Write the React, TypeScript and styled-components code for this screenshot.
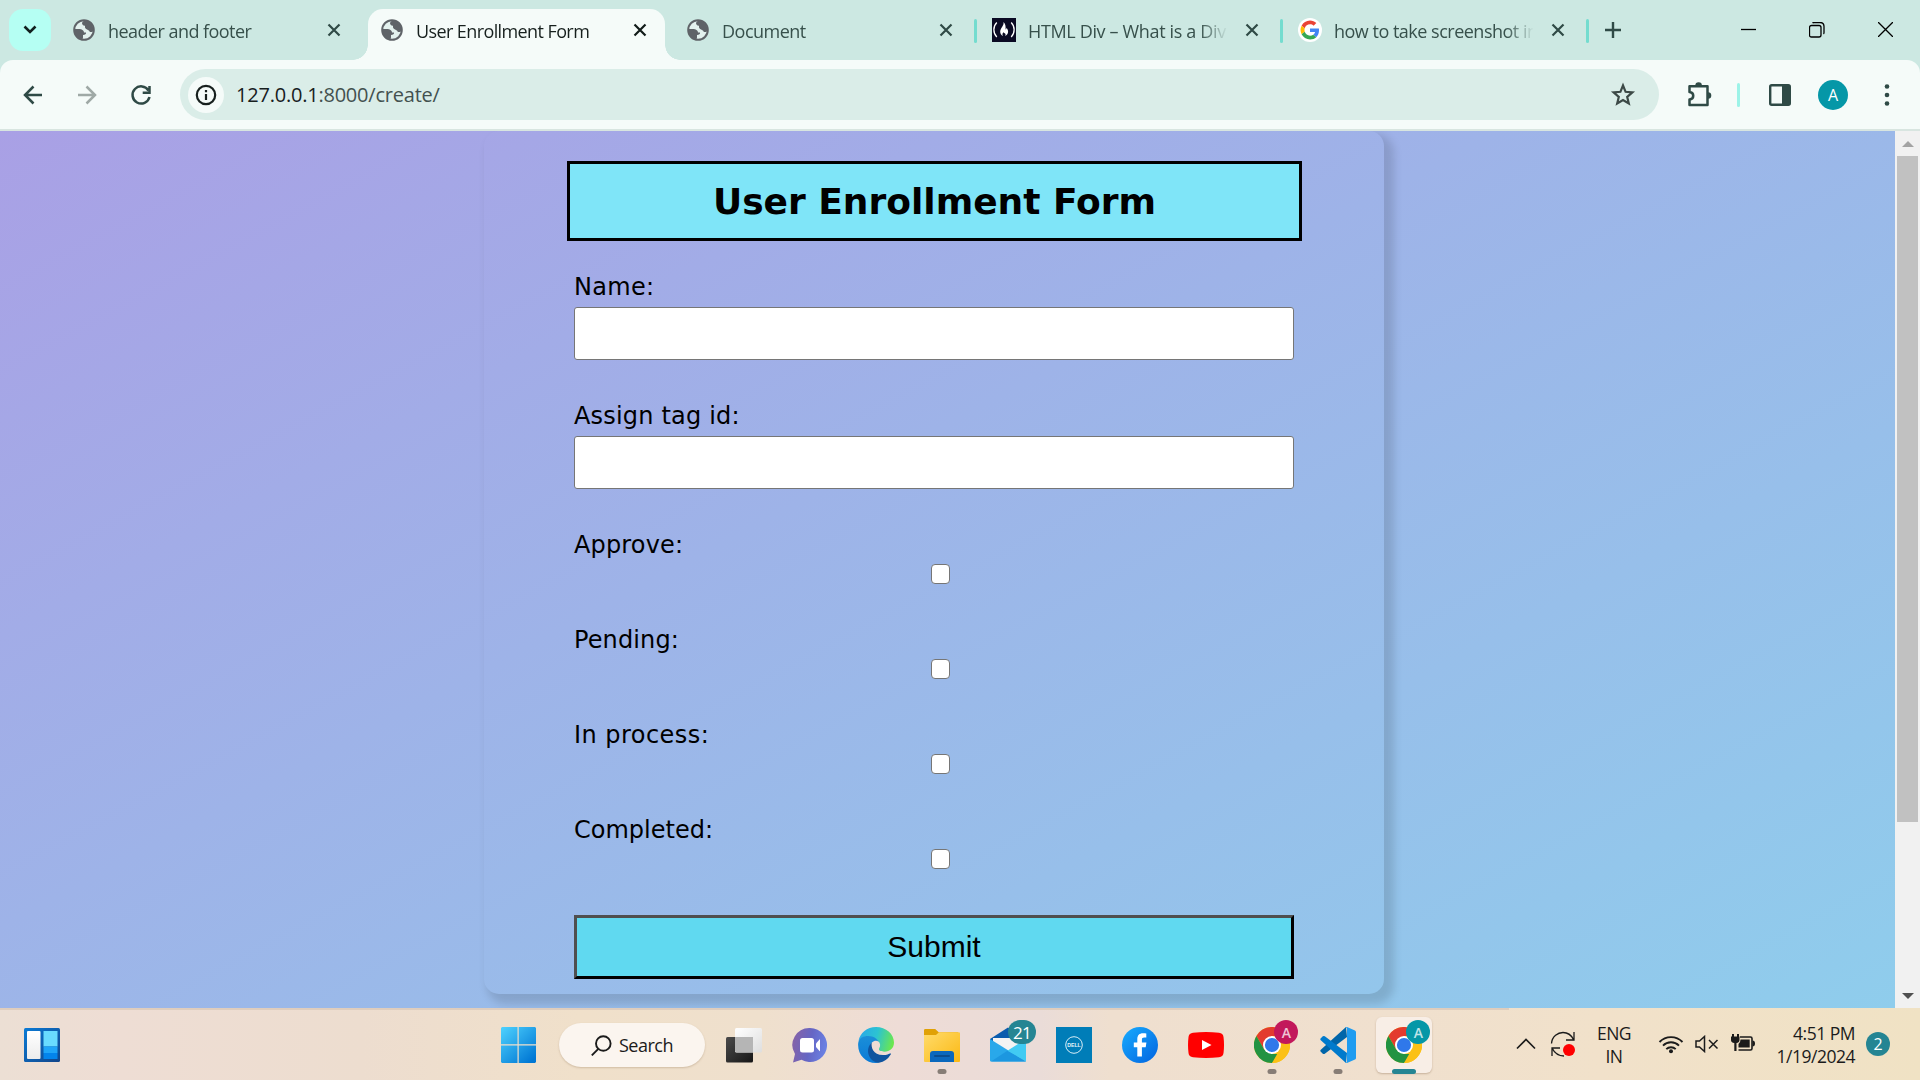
import React from "react";
import styled, { createGlobalStyle, css } from "styled-components";

const ui = `"Open Sans", "Noto Sans", sans-serif`;

const Global = createGlobalStyle`
  * { box-sizing: border-box; }
  html, body { margin: 0; padding: 0; overflow: hidden; }
  svg { display: block; flex: none; }
`;

const Screen = styled.div`
  width: 1920px;
  height: 1080px;
  display: flex;
  flex-direction: column;
  overflow: hidden;
  font-family: ${ui};
`;

/* ---------- text with tuned tracking ---------- */
const Label = styled.span<{ $size: number; $track?: number; $color?: string }>`
  display: block;
  font-size: ${(p) => p.$size}px;
  letter-spacing: ${(p) => p.$track ?? 0}px;
  color: ${(p) => p.$color ?? "#1b1b1b"};
  white-space: nowrap;
  line-height: 1.3;
`;

/* ---------- tab strip ---------- */
const TabStrip = styled.header`
  height: 60px;
  flex: none;
  display: flex;
  background: #cce8e2;
  padding-left: 9px;
`;

const TabSearch = styled.button`
  width: 42px;
  height: 42px;
  margin: 9px 11px 0 0;
  padding: 0;
  border: 0;
  border-radius: 14px;
  background: #b5fff3;
  display: flex;
  align-items: center;
  justify-content: center;
`;

const TabBox = styled.div<{ $active?: boolean }>`
  position: relative;
  width: 306px;
  height: 51px;
  margin-top: 9px;
  padding: 0 27px 9px 12px;
  display: flex;
  align-items: center;
  &:first-of-type {
    padding-left: 10px;
  }
  ${(p) =>
    p.$active &&
    css`
      &::before {
        content: "";
        position: absolute;
        inset: 0 9px 0 0;
        background: #f5fbf9;
        border-radius: 15px 15px 0 0;
      }
      &::after {
        content: "";
        position: absolute;
        bottom: 0;
        left: -15px;
        right: -6px;
        height: 15px;
        background:
          radial-gradient(circle at 0 0, transparent 14.5px, #f5fbf9 15px) left / 15px 15px no-repeat,
          radial-gradient(circle at 100% 0, transparent 14.5px, #f5fbf9 15px) right / 15px 15px no-repeat;
      }
    `}
  > * {
    position: relative;
    z-index: 1;
  }
`;

const TabTitle = styled.div`
  flex: 1;
  min-width: 0;
  margin: 4px 18px 0 12px;
  overflow: hidden;
  mask-image: linear-gradient(90deg, #000 172px, transparent 200px);
`;

const Divider = styled.i<{ $color: string }>`
  display: block;
  flex: none;
  width: 3px;
  height: 24px;
  border-radius: 2px;
  background: ${(p) => p.$color};
`;

const TabEnd = styled.span`
  width: 3px;
  margin: 19px 3px 0 -6px;
`;

const NewTab = styled.div`
  margin: 22px 0 0 13px;
`;

const WindowButtons = styled.div`
  display: flex;
  align-items: flex-start;
  gap: 53px;
  margin: 22px 27px 0 auto;
`;

/* ---------- toolbar ---------- */
const ToolbarBack = styled.div`
  flex: none;
  background: #cce8e2;
`;

const Toolbar = styled.div`
  height: 71px;
  display: flex;
  align-items: center;
  padding: 0 25px 0 21px;
  background: #f5fbf9;
  border-bottom: 2px solid #d8e5e0;
  border-radius: 13px 13px 0 0;
`;

const NavIcons = styled.div`
  display: flex;
  gap: 30px;
  width: 159px;
`;

const AddressBar = styled.div`
  width: 1479px;
  height: 51px;
  border-radius: 26px;
  background: #daede8;
  display: flex;
  align-items: center;
  padding: 0 23px 0 8px;
`;

const InfoDot = styled.div`
  width: 36px;
  height: 36px;
  border-radius: 50%;
  background: #f5fbf9;
  display: grid;
  place-items: center;
  margin-right: 12px;
`;

const Url = styled.div`
  flex: 1;
  font-size: 20px;
  letter-spacing: -0.22px;
  color: #43514f;
  b {
    font-weight: 400;
    color: #17201e;
  }
`;

const ToolActions = styled.div`
  flex: 1;
  display: flex;
  align-items: center;
  padding-left: 26px;
`;

const Avatar = styled.div`
  width: 30px;
  height: 30px;
  border-radius: 50%;
  background: #0597a7;
  color: #fff;
  font: 16px/30px ${ui};
  text-align: center;
  margin: 0 36px 0 26px;
`;

/* ---------- page ---------- */
const Viewport = styled.main`
  height: 877px;
  flex: none;
  display: flex;
  overflow: hidden;
`;

const Page = styled.div`
  flex: 1;
  overflow: hidden;
  background: linear-gradient(152deg, #a9a0e5, #8cd2ed) 0 0 / 100% 1091px no-repeat;
  padding-left: 484px;
`;

const Form = styled.form`
  width: 900px;
  height: 863px;
  padding: 30px 90px 0;
  border-radius: 15px;
  box-shadow: 6.5px 6.5px 8px 3.5px rgba(0, 0, 0, 0.13);
  font-family: Verdana, "DejaVu Sans", sans-serif;
  color: #000;
`;

const Heading = styled.h1`
  width: 735px;
  height: 80px;
  margin: 0 0 33px -7px;
  border: 3px solid #000;
  background: #7fe5f8;
  font-size: 36px;
  line-height: 76px;
  text-align: center;
`;

const Field = styled.div<{ $check?: boolean }>`
  height: ${(p) => (p.$check ? 95 : 129)}px;
`;

const FieldLabel = styled.label<{ $track: number }>`
  display: block;
  height: 33px;
  font-size: 24px;
  line-height: 26px;
  letter-spacing: ${(p) => p.$track}px;
`;

const TextInput = styled.input`
  display: block;
  width: 720px;
  height: 53px;
  border: 1px solid #767676;
  border-radius: 3px;
  background: #fff;
  padding: 0;
`;

const Check = styled.input`
  appearance: none;
  display: block;
  width: 19.5px;
  height: 19.5px;
  margin: -1px 0 0 356.5px;
  border: 1.5px solid #767676;
  border-radius: 4px;
  background: #fff;
`;

const Submit = styled.button`
  display: block;
  width: 720px;
  height: 64px;
  margin-top: 3px;
  padding: 0;
  border: 3px solid;
  border-color: #4f4f4f #000 #000 #4f4f4f;
  background: #60d9f0;
  font: 30px/58px "Liberation Sans", Arial, sans-serif;
  color: #000;
`;

const Scrollbar = styled.div`
  width: 25px;
  background: #f1f1f1;
  display: flex;
  flex-direction: column;
  align-items: center;
  padding: 10px 0 9px;
`;

const Thumb = styled.div`
  width: 21px;
  height: 666px;
  margin: 9px 0 auto;
  background: #c1c1c1;
`;

const Arrow = styled.i<{ $down?: boolean }>`
  width: 0;
  height: 0;
  border: 6px solid transparent;
  ${(p) =>
    p.$down
      ? "border-top-color:#505050;border-bottom:0;"
      : "border-bottom-color:#a3a3a3;border-top:0;"}
`;

/* ---------- taskbar ---------- */
const Taskbar = styled.footer`
  height: 72px;
  flex: none;
  display: flex;
  align-items: center;
  background:
    linear-gradient(#dfcdbd, #dfcdbd) 0 0 / 1509px 2px no-repeat,
    linear-gradient(90deg, #ecdfd4 0, #eeddd4 120px, #edddcf 360px, #f0e0ca 580px, #efe0cd 760px, #eedcd6 900px, #eadcd8 1040px, #efdfcf 1110px, #f0e0ce 1400px, #f1e1ca 1600px, #f0e2c4 1920px);
`;

const WidgetSlot = styled.div`
  width: 485px;
  padding: 1px 0 0 24px;
`;

const Slot = styled.div<{ $active?: boolean }>`
  position: relative;
  width: 66px;
  height: 72px;
  display: grid;
  place-items: center;
  ${(p) =>
    p.$active &&
    css`
      &::before {
        content: "";
        position: absolute;
        inset: 9px 5px 7px;
        border-radius: 6px;
        background: #f8eee6;
        box-shadow: 0 1px 2px rgba(120, 90, 60, 0.35);
      }
    `}
  > svg {
    position: relative;
    margin-top: 2px;
  }
`;

const Indicator = styled.i<{ $active?: boolean }>`
  position: absolute;
  bottom: 6px;
  left: 50%;
  transform: translateX(-50%);
  width: ${(p) => (p.$active ? 24 : 9)}px;
  height: 5px;
  border-radius: 3px;
  background: ${(p) => (p.$active ? "#258593" : "#877d76")};
`;

const Badge = styled.span<{ $bg: string; $wide?: boolean }>`
  position: absolute;
  top: 12px;
  left: ${(p) => (p.$wide ? 33 : 35)}px;
  width: ${(p) => (p.$wide ? 28 : 24)}px;
  height: 24px;
  border-radius: 12px;
  background: ${(p) => p.$bg};
  color: ${(p) => (p.$wide ? "#fff" : "rgba(255, 255, 255, 0.75)")};
  font: ${(p) => (p.$wide ? "17px/25px" : "600 14px/25px")} ${ui};
  letter-spacing: -0.8px;
  text-align: center;
`;

const SearchPill = styled.div`
  width: 146px;
  height: 44px;
  margin: 2px 6px 0 8px;
  border-radius: 22px;
  background: #fbf5ef;
  box-shadow: 0 1px 2px rgba(150, 120, 90, 0.35);
  display: flex;
  align-items: center;
  padding-left: 32px;
  gap: 7px;
  > span {
    margin-top: 2px;
  }
`;

const Tray = styled.div`
  margin-left: auto;
  display: flex;
  align-items: center;
  padding-right: 30px;
`;

const Stack = styled.div<{ $w: number; $align: string; $ml: number }>`
  width: ${(p) => p.$w}px;
  margin: 2px 0 0 ${(p) => p.$ml}px;
  display: flex;
  flex-direction: column;
  align-items: ${(p) => p.$align};
`;

const Count = styled.div`
  width: 24px;
  height: 24px;
  margin: 0 0 0 11px;
  border-radius: 50%;
  background: #258593;
  color: #fff;
  font: 16px/24px ${ui};
  text-align: center;
`;

const Space = styled.i<{ $w: number }>`
  flex: none;
  width: ${(p) => p.$w}px;
`;

/* ---------- icons ---------- */
const Globe = () => (
  <svg width="24" height="24" viewBox="0 0 24 24">
    <circle cx="12" cy="12" r="9.800" fill="#e3f1ee" stroke="#5f6368" strokeWidth="2" />
    <path d="M12.500 2.500C10 4 9.500 5 10.500 6.500 11 7.500 12 8 13 7.500V9.500C14 12 17 11.500 17.500 13.500c1 1 3 .5 4-.5A9.700 9.700 0 0 0 12.500 2.500z" fill="#5f6368" />
    <path d="M2.200 11H7c2.500 0 5 1.500 5 3.500h2c.5 1.500-1 2.500-3 2.500v2.500c0 1-1 2-1.500 2A9.700 9.700 0 0 1 2.200 11z" fill="#5f6368" />
  </svg>
);

const FreeCodeCamp = () => (
  <svg width="24" height="24" viewBox="0 0 24 24">
    <path d="M0 0h24v24H0z" fill="#0a0a23" />
    <path d="M4.800 4.500C.9 8.500.9 15 4.800 19M19.200 4.500c3.900 4 3.900 10.500 0 14.500" stroke="#fff" strokeWidth="1.300" fill="none" />
    <path d="M11.500 4c.7 4-3.300 6-3.300 9.700 0 2 1 3.300 2.700 4.200-.8-1.300-.4-2.600.7-3.800.1 1 .6 1.300 1.300 1.100 1 .8.8 1.900.1 2.700 1.900-.7 3.200-2.100 3.100-4.300 0-1.600-.8-2.900-1.700-3.900.1 1-.2 1.600-.8 1.700C13.800 8.500 13.500 5.500 11.500 4z" fill="#fff" />
  </svg>
);

const Google = () => (
  <svg width="24" height="24" viewBox="0 0 24 24">
    <circle cx="12" cy="12" r="12" fill="#fff" />
    <g transform="translate(2.600 2.600) scale(.392)">
      <path fill="#EA4335" d="M24 9.500c3.540 0 6.710 1.220 9.210 3.600l6.850-6.850C35.900 2.380 30.470 0 24 0 14.620 0 6.510 5.380 2.560 13.220l7.980 6.190C12.430 13.720 17.740 9.500 24 9.500z" />
      <path fill="#4285F4" d="M46.980 24.550c0-1.570-.15-3.090-.38-4.550H24v9.020h12.940c-.58 2.960-2.260 5.480-4.780 7.180l7.730 6c4.510-4.180 7.090-10.360 7.090-17.650z" />
      <path fill="#FBBC05" d="M10.530 28.590a14.500 14.500 0 0 1 0-9.180l-7.980-6.190a24 24 0 0 0 0 21.560l7.980-6.190z" />
      <path fill="#34A853" d="M24 48c6.480 0 11.930-2.130 15.890-5.810l-7.730-6c-2.150 1.450-4.920 2.300-8.160 2.300-6.260 0-11.570-4.220-13.470-9.910l-7.980 6.190C6.510 42.620 14.620 48 24 48z" />
    </g>
  </svg>
);

const Stroke = ({ d, w, h, sw = 2, color = "#2f4a46" }: { d: string; w: number; h: number; sw?: number; color?: string }) => (
  <svg width={w} height={h} viewBox={`0 0 ${w} ${h}`} fill="none" stroke={color} strokeWidth={sw}>
    <path d={d} />
  </svg>
);

const Close = ({ dark }: { dark?: boolean }) => (
  <Stroke w={14} h={14} sw={2.2} d="M1.500 1.500l11 11M12.500 1.500l-11 11" color={dark ? "#111b19" : "#2f4a46"} />
);

const Chrome = () => (
  <svg width="36" height="36" viewBox="0 0 36 36">
    <circle cx="18" cy="18" r="18" fill="#fbc116" />
    <path d="M2.400 9A18 18 0 0 1 33.600 9H18l-7.800 13.500z" fill="#e33b2e" />
    <path d="M2.400 9l7.800 13.500L18 27h7.800L18 36A18 18 0 0 1 2.400 9z" fill="#229342" />
    <path d="M18 36l7.800-13.500V9h7.800A18 18 0 0 1 18 36z" fill="#fbc116" />
    <circle cx="18" cy="18" r="9" fill="#fff" />
    <circle cx="18" cy="18" r="7.100" fill="#2f78ea" />
  </svg>
);

const Widgets = () => (
  <svg width="36" height="34" viewBox="0 0 36 34">
    <defs>
      <linearGradient id="wg" x1="0" y1="0" x2="1" y2="1"><stop stopColor="#0a7bd6" /><stop offset="1" stopColor="#12458a" /></linearGradient>
      <linearGradient id="ww" x1="0" y1="0" x2="0" y2="1"><stop stopColor="#fff" /><stop offset="1" stopColor="#ececec" /></linearGradient>
    </defs>
    <rect width="36" height="34" rx="1.500" fill="url(#wg)" />
    <rect x="3" y="3" width="13.500" height="28" rx="1" fill="url(#ww)" />
    <path d="M19.500 3h14v15.500h-14z" fill="#69dcff" />
    <path d="M19.500 18.500h14V25h-14z" fill="#1fa5f8" />
    <path d="M19.500 25h14v6h-14z" fill="#0384ec" />
  </svg>
);

const Windows = () => (
  <svg width="36" height="36" viewBox="0 0 36 36">
    <defs><linearGradient id="win" gradientUnits="userSpaceOnUse" x1="0" y1="0" x2="32" y2="34"><stop stopColor="#50d4ff" /><stop offset="1" stopColor="#0077d4" /></linearGradient></defs>
    <path d="M2 0h15.500v17.300H1V1zM18.700 0H35l1 1v16.300H18.700zM1 18.500h16.500V36H2l-1-1zM18.700 18.500H36V35l-1 1H18.700z" fill="url(#win)" />
  </svg>
);

const TaskView = () => (
  <svg width="36" height="36" viewBox="0 0 36 36">
    <defs>
      <linearGradient id="tv" x1="0" y1="0" x2="1" y2="1"><stop stopColor="#4b4b4b" /><stop offset="1" stopColor="#161616" /></linearGradient>
      <linearGradient id="tl" x1="0" y1="0" x2="1" y2="1"><stop stopColor="#fff" /><stop offset="1" stopColor="#dedede" /></linearGradient>
    </defs>
    <rect y="10" width="27" height="25.500" rx="1.500" fill="url(#tv)" />
    <rect x="9" y="1" width="27" height="24.500" rx="1.500" fill="url(#tl)" />
    <path d="M9 10h18v15.500H10.500L9 24z" fill="#b5b5b5" />
  </svg>
);

const Chat = () => (
  <svg width="36" height="36" viewBox="0 0 36 36">
    <defs><linearGradient id="ch" x1="0" y1="0.400" x2="1" y2="0.600"><stop stopColor="#8562a8" /><stop offset=".5" stopColor="#6566c4" /><stop offset="1" stopColor="#6b83e6" /></linearGradient></defs>
    <path d="M18 1a17 17 0 1 1-8.500 31.700L1 35.500l2-8.500A17 17 0 0 1 18 1z" fill="url(#ch)" />
    <rect x="8" y="11" width="14" height="14.500" rx="2.500" fill="#fff" />
    <path d="M24 16.500l3.500-4q.5-.4.5.3v11q0 .7-.5.3l-3.500-4z" fill="#fff" />
  </svg>
);

const Edge = () => (
  <svg width="36" height="36" viewBox="0 0 36 36">
    <defs>
      <linearGradient id="e1" x1="0" y1="0.300" x2="1" y2="0.500"><stop stopColor="#29a8e8" /><stop offset=".5" stopColor="#2cc3d2" /><stop offset="1" stopColor="#6be74e" /></linearGradient>
      <linearGradient id="e2" x1="0" y1="0" x2="0" y2="1"><stop stopColor="#1b8fd8" /><stop offset="1" stopColor="#0a7ad6" /></linearGradient>
    </defs>
    <path d="M.5 14C2 6 9 0 18 0c10 0 18 7 18 15.500 0 6-4.500 9.200-9.500 9.200-4 0-6.500-1.500-5.300-3.400 1.500-2.300 1.300-5-1-7.300C15 8.500 4.500 8 .5 14z" fill="url(#e1)" />
    <path d="M.2 16C1 10.500 6 8.700 10.500 8.900c5 .2 9 2.600 10.300 6-1.800-1.900-4.800-1.500-6.800.6C9 20.500 12 32 21.500 35.600 9.500 38-1 28.500.2 16z" fill="url(#e2)" />
    <path d="M13.800 15.700c-1 4 1.200 12.300 11.200 12.300 4 0 6-1.400 7.200-1.600.9-.1 1 .5.500 1.200A17 17 0 0 1 21 35.800C9.500 34.500 7 21 13.800 15.700z" fill="#0f549f" />
  </svg>
);

const Folder = () => (
  <svg width="36" height="36" viewBox="0 0 36 36">
    <defs><linearGradient id="fo" x1="0" y1="0" x2="1" y2="1"><stop stopColor="#ffdb6b" /><stop offset="1" stopColor="#fbb914" /></linearGradient></defs>
    <path d="M0 3.200Q0 2 1.200 2h10l3.500 3.200H34V12H0z" fill="#e0a106" />
    <path d="M0 8h12l3-2.800h20q1 0 1 1V34q0 1-1 1H1q-1 0-1-1z" fill="url(#fo)" />
    <path d="M6 35V27q0-3 3-3h18q3 0 3 3v8z" fill="#0b68bd" />
    <path d="M11 29h14" stroke="#0a4d8f" strokeWidth="2" strokeLinecap="round" />
  </svg>
);

const Mail = () => (
  <svg width="36" height="36" viewBox="0 0 36 36">
    <path d="M0 12L18 .5 36 12v8H0z" fill="#0b5cae" />
    <path d="M3 11h30v9L18 25 3 19z" fill="#f3f3f3" />
    <path d="M0 12l36 22.500H1q-1 0-1-1z" fill="#29a8ea" />
    <path d="M36 12L17 24l19 10.500z" fill="#41cbf3" />
    <path d="M17 23.500L36 34.500H1L17 24z" fill="#1c97e0" />
  </svg>
);

const Dell = () => (
  <svg width="36" height="36" viewBox="0 0 36 36">
    <path d="M0 0h36v36H0z" fill="#007db8" />
    <circle cx="18" cy="18" r="8.300" fill="none" stroke="#d9eef7" strokeWidth="1" />
    <text x="18" y="20" textAnchor="middle" fontFamily="Liberation Sans, sans-serif" fontWeight="700" fontSize="5.200" fill="#e6f4fa">DELL</text>
  </svg>
);

const Facebook = () => (
  <svg width="36" height="36" viewBox="0 0 36 36">
    <defs><linearGradient id="fb" x1="0" y1="0" x2="1" y2="1"><stop stopColor="#18acfe" /><stop offset="1" stopColor="#0163e0" /></linearGradient></defs>
    <circle cx="18" cy="18" r="18" fill="url(#fb)" />
    <path d="M15.300 29.500V20.200h-3.500V15.500h3.500v-3.300c0-4 2-6 5.700-6 1.500 0 2.600.2 3.300.4v4h-2.200c-1.600 0-2.200.8-2.200 2.300v2.600h4.500l-.7 4.700h-3.800v9.300z" fill="#fff" />
  </svg>
);

const YouTube = () => (
  <svg width="36" height="36" viewBox="0 0 36 36">
    <path d="M5 5.800q13-1.400 26 0 4 .5 4.500 4.200 1 8 0 16-.5 3.700-4.500 4.200-13 1.400-26 0Q1 29.700.5 26q-1-8 0-16Q1 6.300 5 5.800z" fill="#f00" />
    <path d="M14 13l9.500 5-9.500 5z" fill="#fff" />
  </svg>
);

const VSCode = () => (
  <svg width="36" height="36" viewBox="0 0 36 36">
    <path d="M26 0L.8 22.800q-1 1 0 2l2 1.900q1 .8 2 0L27 10z" fill="#0065a9" />
    <path d="M26 36L.8 13.200q-1-1 0-2l2-1.900q1-.8 2 0L27 26z" fill="#007acc" />
    <path d="M27 0l8 3.500q1 .5 1 1.500v26q0 1-1 1.500L27 36q-1 .2-1.500-.5 1.500.5 1.500-1.500V2q0-2-1.500-1.500Q26-.2 27 0z" fill="#1f9cf0" />
  </svg>
);

type TabInfo = { title: string; icon: React.ReactNode; track: number; active?: boolean; sep?: boolean };
const tabs: TabInfo[] = [
  { title: "header and footer", icon: <Globe />, track: -0.55 },
  { title: "User Enrollment Form", icon: <Globe />, track: -0.6, active: true },
  { title: "Document", icon: <Globe />, track: -0.5, sep: true },
  { title: "HTML Div – What is a Div", icon: <FreeCodeCamp />, track: -0.35, sep: true },
  { title: "how to take screenshot in", icon: <Google />, track: -0.5, sep: true },
];

const inputs = [
  { label: "Name:", track: 0.3 },
  { label: "Assign tag id:", track: 0.18 },
];
const checks = [
  { label: "Approve:", track: 0.15 },
  { label: "Pending:", track: 0.12 },
  { label: "In process:", track: 0.45 },
  { label: "Completed:", track: 0 },
];

export default function App() {
  return (
    <Screen>
      <Global />
      <TabStrip>
        <TabSearch>
          <Stroke w={14} h={10} sw={2.6} d="M1.500 1.500l5.500 5.500 5.500-5.500" color="#12201e" />
        </TabSearch>
        {tabs.map((t) => (
          <React.Fragment key={t.title}>
            <TabBox $active={t.active}>
              {t.icon}
              <TabTitle>
                <Label $size={18} $track={t.track} $color={t.active ? "#17201e" : "#37504b"}>{t.title}</Label>
              </TabTitle>
              <Close dark={t.active} />
            </TabBox>
            {t.sep && <TabEnd><Divider $color="#74dccf" /></TabEnd>}
          </React.Fragment>
        ))}
        <NewTab><Stroke w={16} h={16} sw={2.4} d="M8 0v16M0 8h16" /></NewTab>
        <WindowButtons>
          <Stroke w={15} h={15} sw={1.3} d="M0 7.500h15" color="#000" />
          <Stroke w={16} h={16} sw={1.3} d="M2.500 3.500h7.500q2 0 2 2v7.500q0 2-2 2h-7.500q-2 0-2-2v-7.500q0-2 2-2zM3.500 1q.5-.5 1.500-.5h6q4 0 4 4v6q0 1-.5 1.500" color="#000" />
          <Stroke w={15} h={15} sw={1.3} d="M0 0l15 15M15 0L0 15" color="#000" />
        </WindowButtons>
      </TabStrip>

      <ToolbarBack>
        <Toolbar>
          <NavIcons>
            <Stroke w={24} h={24} sw={2.5} d="M21 12H4.500M12.500 3.500L4 12l8.500 8.500" />
            <Stroke w={24} h={24} sw={2.5} d="M3 12h16.500M11.500 3.500L20 12l-8.500 8.500" color="#9fa9a6" />
            <Stroke w={24} h={24} sw={2.5} d="M19.500 7.500A8.600 8.600 0 1 0 20.500 14M20.500 3v6.700h-6.800" />
          </NavIcons>
          <AddressBar>
            <InfoDot>
              <svg width="22" height="22" viewBox="0 0 22 22" fill="none" stroke="#17201e">
                <circle cx="11" cy="11" r="9.200" strokeWidth="2.200" />
                <path d="M11 10v6M11 6v2.200" strokeWidth="2.200" />
              </svg>
            </InfoDot>
            <Url><b>127.0.0.1</b>:8000/create/</Url>
            <Stroke w={26} h={26} sw={2.2} d="M13 3.500l2.600 6.300 6.800.6-5.200 4.500 1.600 6.600L13 18l-5.800 3.500 1.600-6.600-5.200-4.500 6.800-.6z" color="#3d4a47" />
          </AddressBar>
          <ToolActions>
            <svg width="28" height="28" viewBox="0 0 28 28">
              <path d="M4.500 5.200h18V24h-18v-5.500c5-.5 5-7 0-7.500z" fill="none" stroke="#2f4a46" strokeWidth="2.500" strokeLinejoin="round" />
              <path d="M10.300 4.500a3.300 3.300 0 0 1 6.600 0zM23 11.200a3.300 3.300 0 0 1 0 6.600z" fill="#2f4a46" />
            </svg>
            <Space $w={24} />
            <Divider $color="#9cf3e8" />
            <Space $w={28} />
            <svg width="24" height="24" viewBox="0 0 24 24">
              <rect x="2.200" y="2.200" width="19.600" height="19.600" rx="1.500" fill="none" stroke="#2f4a46" strokeWidth="2.400" />
              <path d="M14 2h8v20h-8z" fill="#2f4a46" />
            </svg>
            <Avatar>A</Avatar>
            <svg width="6" height="24" viewBox="0 0 6 24" fill="#2f4a46">
              <circle cx="3" cy="3.500" r="2.300" /><circle cx="3" cy="12" r="2.300" /><circle cx="3" cy="20.500" r="2.300" />
            </svg>
          </ToolActions>
        </Toolbar>
      </ToolbarBack>

      <Viewport>
        <Page>
          <Form>
            <Heading>User Enrollment Form</Heading>
            {inputs.map((f) => (
              <Field key={f.label}><FieldLabel $track={f.track}>{f.label}</FieldLabel><TextInput /></Field>
            ))}
            {checks.map((f) => (
              <Field $check key={f.label}><FieldLabel $track={f.track}>{f.label}</FieldLabel><Check type="checkbox" /></Field>
            ))}
            <Submit type="button">Submit</Submit>
          </Form>
        </Page>
        <Scrollbar>
          <Arrow />
          <Thumb />
          <Arrow $down />
        </Scrollbar>
      </Viewport>

      <Taskbar>
        <WidgetSlot><Widgets /></WidgetSlot>
        <Slot><Windows /></Slot>
        <SearchPill>
          <svg width="21" height="21" viewBox="0 0 21 21" fill="none" stroke="#1b1b1b" strokeWidth="1.900">
            <circle cx="12.300" cy="8.500" r="7.300" /><path d="M7.300 13.800L.8 20.300" />
          </svg>
          <Label $size={18} $track={-0.5}>Search</Label>
        </SearchPill>
        <Slot><TaskView /></Slot>
        <Slot><Chat /></Slot>
        <Slot><Edge /></Slot>
        <Slot><Folder /><Indicator /></Slot>
        <Slot><Mail /><Badge $bg="#258593" $wide>21</Badge></Slot>
        <Slot><Dell /></Slot>
        <Slot><Facebook /></Slot>
        <Slot><YouTube /></Slot>
        <Slot><Chrome /><Badge $bg="#c2185b">A</Badge><Indicator /></Slot>
        <Slot><VSCode /><Indicator /></Slot>
        <Slot $active><Chrome /><Badge $bg="#0597a7">A</Badge><Indicator $active /></Slot>
        <Tray>
          <Stroke w={20} h={12} sw={1.7} d="M1 10.500L10 1.500l9 9" color="#1b1b1b" />
          <Space $w={14} />
          <svg width="26" height="26" viewBox="0 0 26 26" fill="none" stroke="#1b1b1b" strokeWidth="1.300">
            <path d="M1.500 12.500C2 5 8 1.500 13 1.500c5 0 8.500 3 10.500 7M24 1v8h-8M2 25v-8h8M2 17c2 4 6 8 12 8" />
            <circle cx="19" cy="19" r="6" fill="#f00" stroke="none" />
          </svg>
          <Stack $w={40} $align="center" $ml={18}>
            <Label $size={17.5} $track={-0.5}>ENG</Label>
            <Label $size={17.5} $track={-0.5}>IN</Label>
          </Stack>
          <Space $w={24} />
          <svg width="26" height="20" viewBox="0 0 26 20" fill="none" stroke="#1b1b1b" strokeWidth="1.900">
            <path d="M1.500 8a16 16 0 0 1 23 0M5 11.600a11.200 11.200 0 0 1 16 0M8.300 15.200a6.600 6.600 0 0 1 9.400 0" />
            <circle cx="13" cy="17.300" r="2" fill="#1b1b1b" stroke="none" />
          </svg>
          <Space $w={11} />
          <svg width="24" height="18" viewBox="0 0 24 18" fill="none" stroke="#1b1b1b" strokeWidth="1.500">
            <path d="M1 6h3.500l5-4.500v15l-5-4.500H1zM14 5l8.500 8.500M22.500 5L14 13.500" />
          </svg>
          <Space $w={12} />
          <svg width="26" height="22" viewBox="0 0 26 22">
            <path d="M2 1v3M7 1v3" stroke="#1b1b1b" strokeWidth="2" />
            <path d="M0 3.500h8.500V7q0 2.500-3 3v8H3.300v-8Q0 9.500 0 7z" fill="#1b1b1b" />
            <path d="M9 4h10.500q1.500 0 1.500 1.500v10q0 1.500-1.500 1.500h-12" fill="none" stroke="#1b1b1b" strokeWidth="1.600" />
            <path d="M9.500 6.500h9.200v8H7.500V11q2-1.500 2-4.500zM21.500 7.500q2.500 0 2.500 3t-2.500 3z" fill="#1b1b1b" />
          </svg>
          <Stack $w={98} $align="flex-end" $ml={0}>
            <Label $size={17.5} $track={-0.5}>4:51 PM</Label>
            <Label $size={17.5} $track={-0.5}>1/19/2024</Label>
          </Stack>
          <Count>2</Count>
        </Tray>
      </Taskbar>
    </Screen>
  );
}
